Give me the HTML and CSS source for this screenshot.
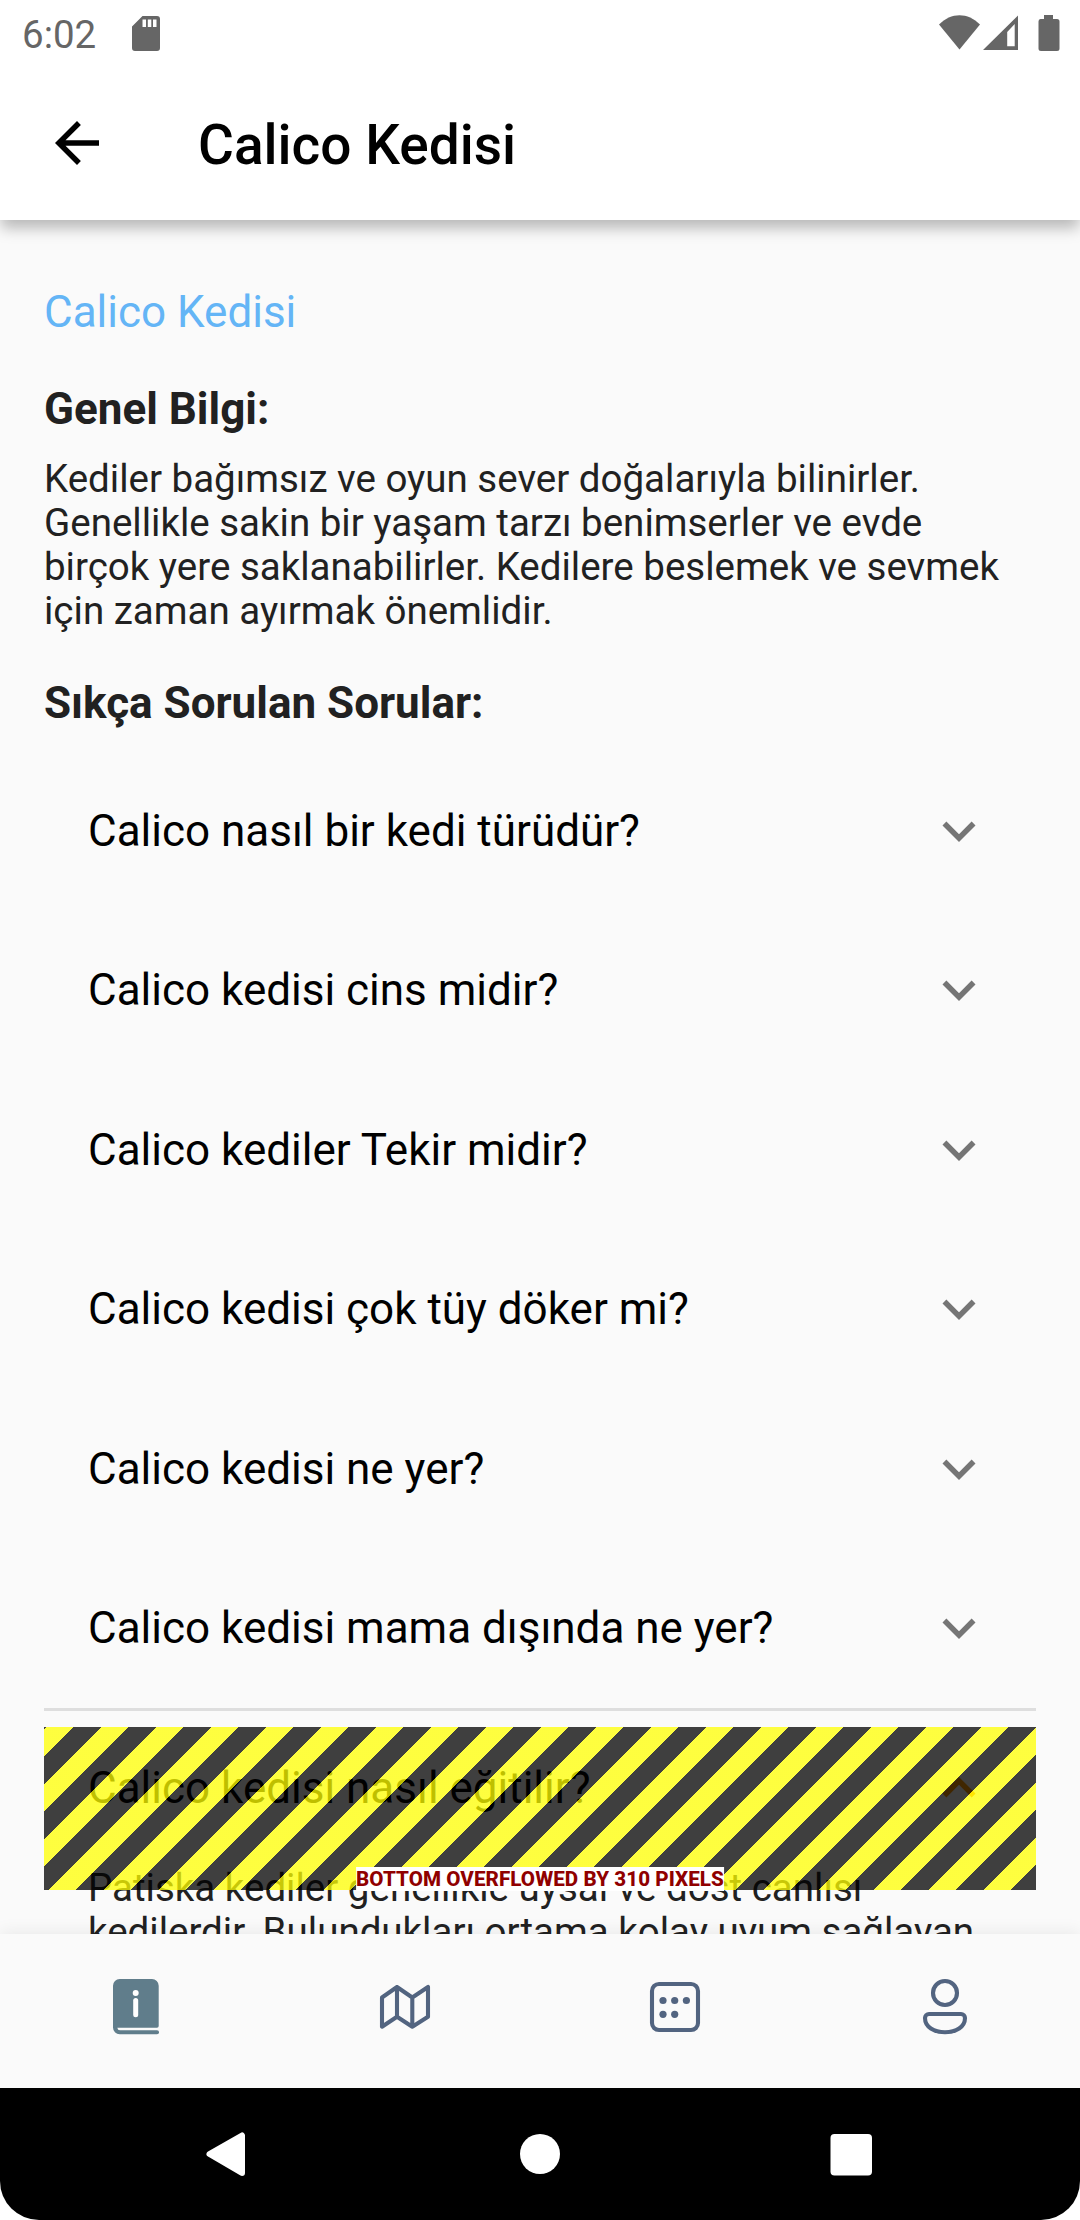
FILE: index.html
```html
<!DOCTYPE html>
<html lang="tr">
<head>
<meta charset="utf-8">
<title>Calico Kedisi</title>
<link rel="stylesheet" href="styles.css">
</head>
<body>
<div class="screen">
  <header class="top">
    <div class="status">
      <span class="clock">6:02</span>
      <svg class="sd" width="28" height="35" viewBox="0 0 28 35"><path fill-rule="evenodd" d="M10.500 0H25a3 3 0 0 1 3 3V32a3 3 0 0 1-3 3H3a3 3 0 0 1-3-3V10.500zM10.500 3.500v7.500h3.500v-7.500zM15.800 3.500v7.500h3.500v-7.500zM21 3.500v7.500h3.500v-7.500z"/></svg>
      <svg class="signals" width="120" height="36" viewBox="0 0 120 36">
        <path d="M0 9.500C12-3 29-3 41 9.500L20.500 34.500z"/>
        <path fill-rule="evenodd" d="M79 .5V35H44zM68.200 17V31.200h7.500V9z"/>
        <path d="M105 0h9v4h4a2.500 2.500 0 0 1 2.500 2.500V33.500a2.500 2.500 0 0 1-2.500 2.500h-16a2.500 2.500 0 0 1-2.500-2.500V6.500A2.500 2.500 0 0 1 101.500 4h3.500z"/>
      </svg>
    </div>
    <div class="appbar">
      <svg class="back" width="66" height="66" viewBox="0 0 24 24"><path d="M20 11H7.830l5.590-5.590L12 4l-8 8 8 8 1.410-1.410L7.830 13H20v-2z"/></svg>
      <h1 class="title">Calico Kedisi</h1>
    </div>
  </header>

  <main class="content">
    <p class="breed">Calico Kedisi</p>
    <h2 class="heading first">Genel Bilgi:</h2>
    <p class="text">Kediler bağımsız ve oyun sever doğalarıyla bilinirler.<br>Genellikle sakin bir yaşam tarzı benimserler ve evde<br>birçok yere saklanabilirler. Kedilere beslemek ve sevmek<br>için zaman ayırmak önemlidir.</p>
    <h2 class="heading">Sıkça Sorulan Sorular:</h2>
    <div class="faq">
      <div class="tile"><span>Calico nasıl bir kedi türüdür?</span><svg class="chevron" viewBox="0 0 24 24"><path d="M16.590 8.590L12 13.170 7.410 8.590 6 10l6 6 6-6z"/></svg></div>
      <div class="tile"><span>Calico kedisi cins midir?</span><svg class="chevron" viewBox="0 0 24 24"><path d="M16.590 8.590L12 13.170 7.410 8.590 6 10l6 6 6-6z"/></svg></div>
      <div class="tile"><span>Calico kediler Tekir midir?</span><svg class="chevron" viewBox="0 0 24 24"><path d="M16.590 8.590L12 13.170 7.410 8.590 6 10l6 6 6-6z"/></svg></div>
      <div class="tile"><span>Calico kedisi çok tüy döker mi?</span><svg class="chevron" viewBox="0 0 24 24"><path d="M16.590 8.590L12 13.170 7.410 8.590 6 10l6 6 6-6z"/></svg></div>
      <div class="tile"><span>Calico kedisi ne yer?</span><svg class="chevron" viewBox="0 0 24 24"><path d="M16.590 8.590L12 13.170 7.410 8.590 6 10l6 6 6-6z"/></svg></div>
      <div class="tile"><span>Calico kedisi mama dışında ne yer?</span><svg class="chevron" viewBox="0 0 24 24"><path d="M16.590 8.590L12 13.170 7.410 8.590 6 10l6 6 6-6z"/></svg></div>
      <div class="tile open"><span>Calico kedisi nasıl eğitilir?</span><svg class="chevron" viewBox="0 0 24 24"><path d="M16.590 8.590L12 13.170 7.410 8.590 6 10l6 6 6-6z"/></svg></div>
      <p class="text answer">Patiska kediler genellikle uysal ve dost canlısı<br>kedilerdir. Bulundukları ortama kolay uyum sağlayan</p>
    </div>
    <div class="overflow"><span class="overflow-label">BOTTOM OVERFLOWED BY 310 PIXELS</span></div>
  </main>

  <nav class="tabs">
    <svg class="tab active" viewBox="0 0 66 66"><path d="M17.700 5H50a6.700 6.700 0 0 1 6.700 6.700V52a1.700 1.700 0 0 1-1.700 1.700H15.300q.4 2.500 2.600 2.500H55a2 2 0 0 1 0 4.100H17.700A6.700 6.700 0 0 1 11 53.600V11.700A6.700 6.700 0 0 1 17.700 5z"/><circle class="mark" cx="33.700" cy="19" r="3"/><rect class="mark" x="31.200" y="24" width="5" height="19.300" rx="2.500"/></svg>
    <svg class="tab" viewBox="0 0 66 66"><path d="M10 52.700V23.500L25 13l15.300 10.500L56 13v29.700l-15.700 10L25 42.700zM25 13v29.700M40.300 23.500v29.200"/></svg>
    <svg class="tab" viewBox="0 0 66 66"><rect x="10" y="10" width="46" height="46" rx="7"/><g class="dots"><circle cx="21" cy="26.500" r="3.600"/><circle cx="32.700" cy="26.500" r="3.600"/><circle cx="44.400" cy="26.500" r="3.600"/><circle cx="21" cy="40.300" r="3.600"/><circle cx="32.700" cy="40.300" r="3.600"/></g></svg>
    <svg class="tab" viewBox="0 0 66 66"><circle cx="33" cy="19" r="12"/><path d="M17 40H49a4 4 0 0 1 4 4C53 53 44 58.300 33 58.300S13 53 13 44a4 4 0 0 1 4-4z"/></svg>
  </nav>

  <footer class="system">
    <svg width="48" height="48" viewBox="0 0 48 48"><path d="M5.500 24L38 5.500V43z" stroke="#fff" stroke-width="6" stroke-linejoin="round"/></svg>
    <svg width="48" height="48" viewBox="0 0 48 48"><circle cx="24" cy="24" r="20"/></svg>
    <svg width="48" height="48" viewBox="0 0 48 48"><rect x="2.500" y="4" width="41.500" height="41.500" rx="4"/></svg>
  </footer>
</div>
</body>
</html>
```
FILE: styles.css
```css
* { box-sizing: border-box; margin: 0; padding: 0; }
body { background: #fff; font-family: Roboto, "Liberation Sans", sans-serif; }
svg { display: block; flex: none; }

.screen {
  width: 1080px;
  height: 2220px;
  display: flex;
  flex-direction: column;
  overflow: hidden;
}

.top {
  height: 220px;
  flex: none;
  background: #fff;
  box-shadow: 0 9px 14px -1px rgba(0, 0, 0, .27);
  z-index: 2;
}
.status {
  height: 66px;
  display: flex;
  align-items: flex-start;
  padding: 15px 21.5px 0 22px;
  fill: #666;
}
.clock {
  width: 110px;
  margin-top: -3px;
  font-size: 38.5px;
  line-height: 46px;
  color: #666;
}
.sd { margin-top: 1px; }
.signals { margin-left: auto; overflow: visible; }
.appbar {
  height: 154px;
  display: flex;
  align-items: center;
  padding-left: 44px;
}
.title {
  margin: 4px 0 0 88px;
  font-size: 55px;
  font-weight: 500;
  line-height: 64px;
  color: #000;
}

.content {
  position: relative;
  height: 1714px;
  flex: none;
  padding: 66px 44px 0;
  background: #fafafa;
  overflow: hidden;
  white-space: nowrap;
}
.breed { font-size: 44px; line-height: 52px; color: #64b5f6; }
.heading {
  margin-top: 44px;
  font-size: 44px;
  font-weight: 700;
  line-height: 52px;
  color: #212121;
}
.heading.first { margin-top: 45px; }
.text {
  margin-top: 22px;
  font-size: 38.5px;
  line-height: 44px;
  color: #212121;
}
.faq { margin-top: 22px; }
.tile {
  height: 159.5px;
  display: flex;
  align-items: center;
  justify-content: space-between;
  padding: 0 44px;
  font-size: 44px;
  color: #000;
}
.chevron { width: 66px; height: 66px; fill: #757575; }
.open { border-top: 3px solid #dedede; height: 157px; }
.open .chevron { transform: rotate(180deg); fill: #ff9800; }
.answer { margin: 1px 44px 0; }

/* warning tape painted over whatever runs past the viewport */
.overflow {
  position: absolute;
  left: 44px;
  right: 44px;
  bottom: 44px;
  height: 163px;
  background: repeating-linear-gradient(135deg,
    rgba(0, 0, 0, .75) 0 1.77px,
    rgba(255, 255, 0, .75) 1.77px 21.21px,
    rgba(0, 0, 0, .75) 21.21px 38.891px);
}
.overflow-label {
  position: absolute;
  left: 50%;
  bottom: -1px;
  transform: translateX(-50%);
  background: #fff;
  color: #900000;
  font-size: 20.625px;
  font-weight: 800;
  line-height: 24px;
  letter-spacing: .06px;
}

.tabs {
  position: relative;
  height: 154px;
  flex: none;
  display: grid;
  grid-template-columns: repeat(4, 1fr);
  justify-items: center;
  padding-top: 40px;
  background: #fafafa;
  box-shadow: 0 -2px 16px rgba(0, 0, 0, .07);
  z-index: 1;
}
.tab {
  width: 66px;
  height: 66px;
  fill: none;
  stroke: #526480;
  stroke-width: 4.1;
  stroke-linejoin: round;
  stroke-linecap: round;
}
.dots { fill: #526480; stroke: none; }
.active { fill: #607d8b; stroke: none; }
.mark { fill: #fff; }

.system {
  position: relative;
  height: 132px;
  flex: none;
  display: grid;
  grid-template-columns: repeat(3, 312px);
  justify-content: center;
  justify-items: center;
  align-items: center;
  background: #000;
  border-radius: 0 0 39px 39px;
  fill: #fff;
  z-index: 2;
}
```
